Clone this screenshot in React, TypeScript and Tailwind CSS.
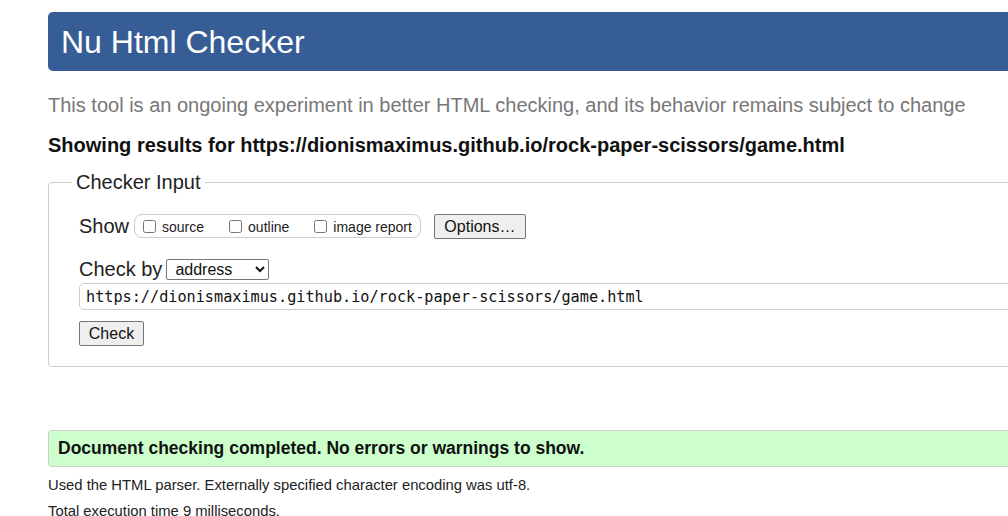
import React from 'react';

export default function App() {
  return (
    <div className="w-[1008px] h-[516px] overflow-hidden bg-white font-['Liberation_Sans',Arial,sans-serif] text-[#111]">
      <div className="ml-[48px] w-[1100px] pt-[12px]">
        {/* Header */}
        <div className="h-[59px] bg-[#365d95] rounded-[5px] flex items-center pl-[13px]">
          <h1 className="text-[32px] text-white leading-none">Nu Html Checker</h1>
        </div>

        <p className="mt-[22px] text-[20px] leading-[24px] text-[#777]">
          This tool is an ongoing experiment in better HTML checking, and its behavior remains subject to change
        </p>
        <p className="mt-[16px] text-[20px] leading-[24px] font-bold text-[#111]">
          Showing results for https://dionismaximus.github.io/rock-paper-scissors/game.html
        </p>

        {/* Checker input */}
        <fieldset className="mt-[13px] border border-[#ccc] rounded-[4px] px-0 pb-[20px] pt-0">
          <legend className="ml-[23px] px-[4px] text-[20px] leading-[24px] text-[#222]">Checker Input</legend>

          <div className="pl-[30px]">
            <div className="flex items-center h-[26px] mt-[19px]">
              <span className="text-[20px] text-[#222] mr-[5px]">Show</span>
              <div className="flex items-center h-[24px] border border-[#ccc] rounded-[8px] pl-[8px] pr-[8px] gap-[25px] text-[14px] text-[#222]">
                <label className="flex items-center gap-[6px]">
                  <input type="checkbox" className="w-[13px] h-[13px] m-0" />
                  <span className="mt-[3px]">source</span>
                </label>
                <label className="flex items-center gap-[6px]">
                  <input type="checkbox" className="w-[13px] h-[13px] m-0" />
                  <span className="mt-[3px]">outline</span>
                </label>
                <label className="flex items-center gap-[6px]">
                  <input type="checkbox" className="w-[13px] h-[13px] m-0" />
                  <span className="mt-[3px]">image report</span>
                </label>
              </div>
              <button className="ml-[13px] h-[25px] w-[92px] border border-[#767676] rounded-[2px] bg-[#efefef] text-[16px] text-[#111]">
                Options…
              </button>
            </div>

            <div className="flex items-center mt-[19px] h-[22px]">
              <span className="text-[20px] text-[#222] mr-[4px]">Check by</span>
              <select className="h-[21px] w-[103px] border border-[#767676] rounded-[2px] text-[16px] text-[#111] pl-[4px] bg-white">
                <option>address</option>
              </select>
            </div>

            <input
              type="text"
              readOnly
              value="https://dionismaximus.github.io/rock-paper-scissors/game.html"
              className="mt-[3px] block w-full h-[27px] border border-[#ccc] rounded-[5px] px-[6px] text-[15.2px] font-['DejaVu_Sans_Mono',monospace] text-[#111] outline-none"
            />

            <button className="mt-[11px] h-[25px] w-[65px] border border-[#767676] rounded-[2px] bg-[#efefef] text-[16px] text-[#111]">
              Check
            </button>
          </div>
        </fieldset>

        {/* Result */}
        <div className="mt-[63px] h-[37px] bg-[#ccffcc] border border-[#ccc] rounded-[4px] flex items-center pl-[9px]">
          <span className="text-[17.5px] font-bold text-[#111]">Document checking completed. No errors or warnings to show.</span>
        </div>

        <p className="mt-[9px] text-[14.8px] leading-[18px] text-[#222]">
          Used the HTML parser. Externally specified character encoding was utf-8.
        </p>
        <p className="mt-[8px] text-[14.8px] leading-[18px] text-[#222]">Total execution time 9 milliseconds.</p>
      </div>
    </div>
  );
}
